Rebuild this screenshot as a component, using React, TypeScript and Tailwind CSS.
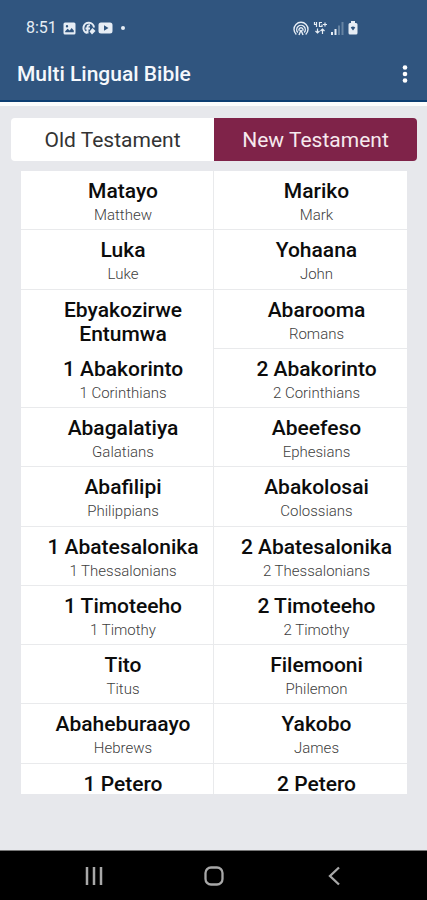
import React from "react";

type Book = { name: string; english?: string };

const books: Book[] = [
  { name: "Matayo", english: "Matthew" },
  { name: "Mariko", english: "Mark" },
  { name: "Luka", english: "Luke" },
  { name: "Yohaana", english: "John" },
  { name: "Ebyakozirwe Entumwa" },
  { name: "Abarooma", english: "Romans" },
  { name: "1 Abakorinto", english: "1 Corinthians" },
  { name: "2 Abakorinto", english: "2 Corinthians" },
  { name: "Abagalatiya", english: "Galatians" },
  { name: "Abeefeso", english: "Ephesians" },
  { name: "Abafilipi", english: "Philippians" },
  { name: "Abakolosai", english: "Colossians" },
  { name: "1 Abatesalonika", english: "1 Thessalonians" },
  { name: "2 Abatesalonika", english: "2 Thessalonians" },
  { name: "1 Timoteeho", english: "1 Timothy" },
  { name: "2 Timoteeho", english: "2 Timothy" },
  { name: "Tito", english: "Titus" },
  { name: "Filemooni", english: "Philemon" },
  { name: "Abaheburaayo", english: "Hebrews" },
  { name: "Yakobo", english: "James" },
  { name: "1 Petero" },
  { name: "2 Petero" },
];

function StatusBar() {
  return (
    <div className="flex h-14 items-center justify-between pr-[69px] pl-[26px] text-[#e6edf5]">
      <div className="flex items-center gap-[6px]">
        <span className="text-base leading-5">8:51</span>
        <svg width="13" height="13" viewBox="0 0 13 13" aria-hidden="true">
          <path
            fill="currentColor"
            fillRule="evenodd"
            d="M2 0.5h9A1.5 1.5 0 0 1 12.500 2v9a1.500 1.500 0 0 1-1.500 1.500H2A1.500 1.500 0 0 1 .5 11V2A1.500 1.500 0 0 1 2 .5ZM2.200 10.300h8.600V8.500L8.600 6 6.700 8.500 4.600 6.800 2.200 9.300ZM4 3a1.200 1.200 0 1 0 0 2.400A1.200 1.200 0 0 0 4 3Z"
          />
        </svg>
        <svg width="14" height="14" viewBox="0 0 14 14" aria-hidden="true">
          <path
            d="M5 12A5.300 5.300 0 1 1 12 6.500M5.500 12.500V7.500M3.500 7.500H8M5.500 7.500V6Q5.500 4 8 4.300"
            fill="none"
            stroke="currentColor"
            strokeWidth="2"
          />
          <path d="M10.500 7 13.500 10 10 13.500 7.500 10.500Z" fill="currentColor" />
        </svg>
        <svg width="15" height="12" viewBox="0 0 15 12" className="-ml-1" aria-hidden="true">
          <path
            fill="currentColor"
            fillRule="evenodd"
            d="M3 .5h9A2.500 2.500 0 0 1 14.500 3v6a2.500 2.500 0 0 1-2.500 2.500H3A2.500 2.500 0 0 1 .5 9V3A2.500 2.500 0 0 1 3 .5ZM6 3.300v5.400L10.500 6Z"
          />
        </svg>
        <span className="ml-0.5 size-1 rounded-full bg-[#e6edf5]" />
      </div>
      <div className="flex items-center gap-1">
        <svg width="16" height="15" viewBox="0 0 16 15" fill="none" stroke="currentColor" strokeWidth="1.4" aria-hidden="true">
          <path d="M3.300 13.500A7 7 0 1 1 12.700 13.500" />
          <path d="M4.800 11.500A4.300 4.300 0 1 1 11.200 11.500" />
          <path d="M6.300 9.800A2 2 0 1 1 9.700 9.800" />
          <path d="M8 9 6 14M8 9l2 5" />
        </svg>
        <svg width="14" height="14" viewBox="0 0 14 14" fill="none" stroke="currentColor" strokeWidth="1.2" aria-hidden="true">
          <path d="M1.500 1v2.500H4M3.500 1v5M9 1.500H6.500v4H9V3.500M10 3.500h4M12 1.500v4" />
          <path d="M4.500 7.500V12M2.500 10l2 2 2-2M9.500 13V8M7.500 10l2-2 2 2" />
        </svg>
        <svg width="13" height="13" viewBox="0 0 13 13" fill="currentColor" aria-hidden="true">
          <path d="M0 10h2v3H0ZM3.500 7h2v6h-2Z" />
          <path d="M7 3.500h2V13H7ZM10.500 0h2v13h-2Z" opacity=".3" />
        </svg>
        <svg width="10" height="14" viewBox="0 0 10 14" aria-hidden="true">
          <path
            fill="currentColor"
            fillRule="evenodd"
            d="M3 0h4v2h1a1.500 1.500 0 0 1 1.500 1.500v8.500A1.500 1.500 0 0 1 8 13.500H2A1.500 1.500 0 0 1 .5 12V3.500A1.500 1.500 0 0 1 2 2h1ZM5 9.500 7.300 6.500Q5 4.500 2.700 6.500Z"
          />
        </svg>
      </div>
    </div>
  );
}

function BookCell({ book, left }: { book: Book; left: boolean }) {
  const side = left ? "border-r border-r-[#e9eaec]" : "";
  const bottom = book.english ? "border-b border-b-[#e9eaec]" : "";
  return (
    <button
      type="button"
      className={`flex min-h-0 flex-col items-center justify-start overflow-hidden pt-2 pr-2 pl-5 text-center ${side} ${bottom}`}
    >
      <span className="text-[21px] leading-6 font-medium text-[#0c0c0c]">{book.name}</span>
      {book.english && <span className="text-[15px] leading-6 font-light text-[#404040]">{book.english}</span>}
    </button>
  );
}

export default function App() {
  return (
    <div className="flex h-screen flex-col bg-[#e7e8ec] font-['Roboto','Noto_Sans',sans-serif]">
      <header className="border-b-2 border-[#0d3e72] bg-[#30557f]">
        <StatusBar />
        <div className="flex h-11 items-start justify-between pr-[14px] pl-[17px]">
          <h1 className="pt-1 text-[21px] leading-7 font-medium text-[#f5f8fc]">Multi Lingual Bible</h1>
          <button type="button" aria-label="More options" className="flex h-9 w-4 items-center justify-center text-white">
            <svg width="6" height="18" viewBox="0 0 6 18" fill="currentColor" aria-hidden="true">
              <circle cx="3" cy="2.500" r="2.300" />
              <circle cx="3" cy="9" r="2.300" />
              <circle cx="3" cy="15.500" r="2.300" />
            </svg>
          </button>
        </div>
      </header>
      <div className="h-1 shrink-0 bg-[#fcfdfd]" />

      <main className="flex min-h-0 flex-1 flex-col pt-3 pr-[10px] pb-14 pl-[11px]">
        <div className="grid h-[43px] shrink-0 grid-cols-2 overflow-hidden rounded-sm text-[21px] leading-7">
          <button type="button" className="bg-white text-[#333]">
            Old Testament
          </button>
          <button type="button" className="bg-[#7f2349] text-[#f6e9ee]">
            New Testament
          </button>
        </div>
        <div className="mx-[10px] mt-[10px] min-h-0 flex-1 overflow-hidden bg-white">
          <div className="grid h-[652px] auto-rows-fr grid-cols-2">
            {books.map((book, i) => (
              <BookCell key={book.name} book={book} left={i % 2 === 0} />
            ))}
          </div>
        </div>
      </main>

      <nav className="flex h-[50px] shrink-0 items-center justify-center gap-[92px] border-t border-[#777] bg-black text-[#a8a8a8]">
        <button type="button" aria-label="Recent apps" className="flex w-7 justify-center">
          <svg width="20" height="20" viewBox="0 0 20 20" stroke="currentColor" strokeWidth="2.500" aria-hidden="true">
            <path d="M3 1v18M10 1v18M17 1v18" />
          </svg>
        </button>
        <button type="button" aria-label="Home" className="flex w-7 justify-center">
          <svg width="20" height="20" viewBox="0 0 20 20" fill="none" stroke="currentColor" strokeWidth="2.300" aria-hidden="true">
            <rect x="1.500" y="1.500" width="17" height="17" rx="5.500" />
          </svg>
        </button>
        <button type="button" aria-label="Back" className="flex w-7 justify-center">
          <svg width="12" height="20" viewBox="0 0 12 20" fill="none" stroke="currentColor" strokeWidth="2.300" aria-hidden="true">
            <path d="M11 1.500 2 10l9 8.500" />
          </svg>
        </button>
      </nav>
    </div>
  );
}
